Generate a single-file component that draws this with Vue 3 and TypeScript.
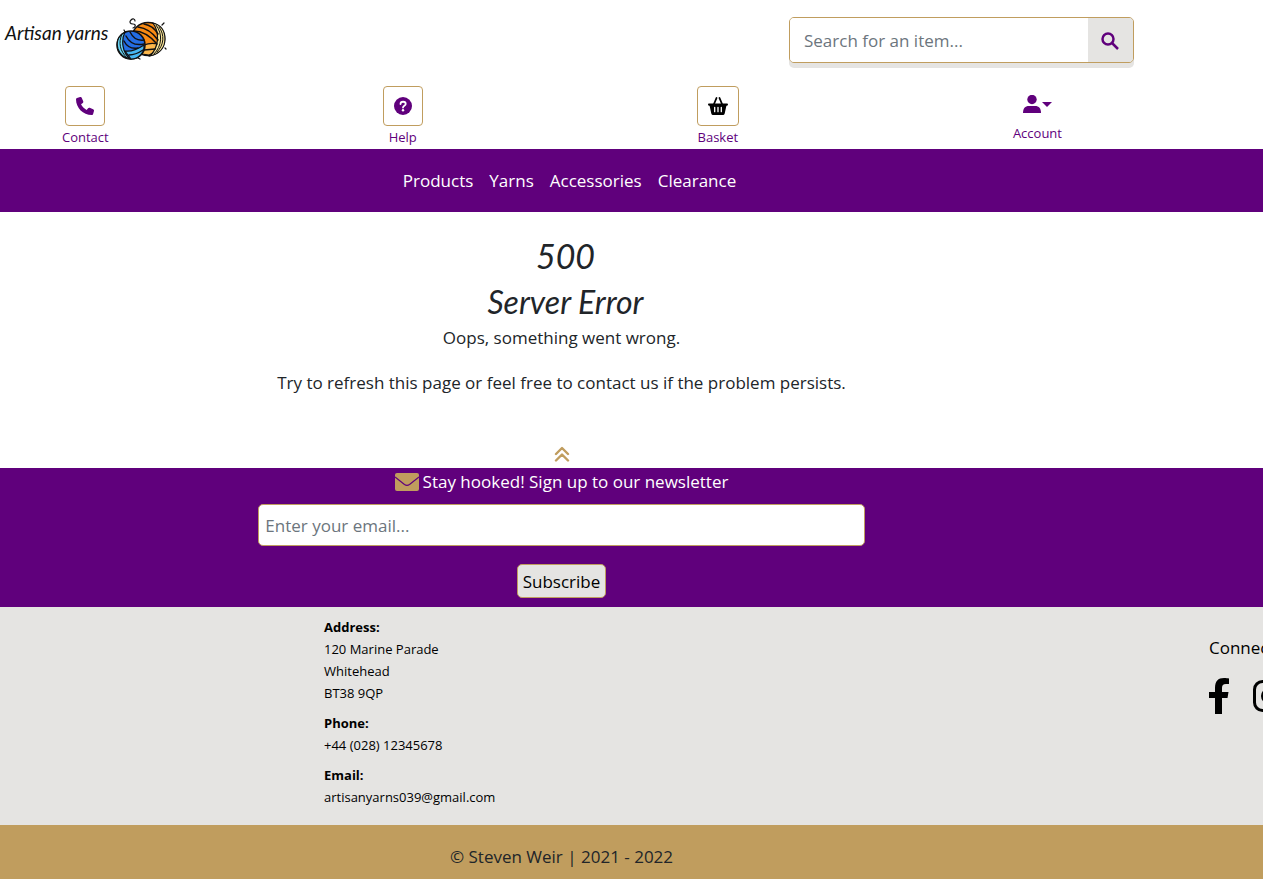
<script setup lang="ts">
import { ref } from 'vue'

const search = ref('')
const email = ref('')
const categories: string[] = ['Products', 'Yarns', 'Accessories', 'Clearance']
const addressLines: string[] = ['120 Marine Parade', 'Whitehead', 'BT38 9QP']
</script>

<template>
  <div class="page">
    <header class="content">
      <div class="top">
        <a class="logo" href="#" aria-label="Artisan yarns home">
          <span class="logo-text">Artisan yarns</span>
          <svg class="yarn" viewBox="0 0 52 44" fill="none" stroke="#111" stroke-linecap="round">
            <path d="M17 11C20 10 20 7 17 7C14 7 13 5 15 3C17 1 19 2 19 4" stroke-width="1.2" />
            <circle cx="32" cy="22" r="16.5" fill="#f98b14" stroke-width="1.5" />
            <path d="M28 28C33 26 37 26 42 27C40 33 37 37 33 38L26 37Z" fill="#fdb84c" stroke-width="1.2" />
            <path d="M37 6C45 8 49 14 49 22C49 31 43 37 34 39C43 30 44 16 37 6Z" fill="#fbe698" stroke-width="1.2" />
            <path d="M40 8C47 17 46 29 38 37M43 10C49 18 48 28 41 35" stroke-width="1" />
            <path d="M18 14C27 14 35 20 41 27M22 10C30 11 37 16 42 23M28 7C34 8 39 12 42 17M28 33L39 32" stroke-width="1.5" />
            <circle cx="15" cy="28" r="14" fill="#246de3" stroke-width="1.5" />
            <path d="M9 15C2 19 0 25 2 32C4 38 9 41 14 42C6 35 5 23 9 15Z" fill="#67d4f5" stroke-width="1.2" />
            <path d="M9 34C15 35 22 32 28 28C29 35 23 42 15 42Z" fill="#47b7f3" stroke-width="1.2" />
            <path d="M6 17C2 26 4 34 11 41" stroke-width="1" />
            <path d="M10 19C13 25 19 29 28 27M14 15C17 21 22 24 28 23M8 24C11 30 16 32 22 31M13 38C18 38 24 35 27 33" stroke-width="1.4" />
            <path d="M46 8L48 6M49 31L50 32M22 41L24 42M8 13L9 15" stroke-width="1.2" />
          </svg>
        </a>
        <form class="search" role="search" @submit.prevent>
          <input v-model="search" type="search" aria-label="Search for an item" placeholder="Search for an item..." />
          <button type="submit" aria-label="Search">
            <svg viewBox="0 0 18 18" fill="none" stroke="currentColor" stroke-width="2.5">
              <circle cx="7" cy="7" r="5.5" /><path d="M11 11L17 17" />
            </svg>
          </button>
        </form>
      </div>

      <div class="actions">
        <a class="action" href="#">
          <span class="tile">
            <svg class="icon" viewBox="0 0 512 512" fill="currentColor"><path d="M165 25C157 6 136-5 116 1L28 25C11 29 0 45 0 64C0 311 201 512 448 512C467 512 483 501 487 484L511 396C517 376 506 355 487 347L391 307C374 300 354 305 343 319L303 368C232 335 177 280 144 209L193 169C207 158 212 138 205 121Z" /></svg>
          </span>
          Contact
        </a>
        <a class="action" href="#">
          <span class="tile">
            <svg class="icon" viewBox="0 0 18 18"><circle cx="9" cy="9" r="9" fill="currentColor" /><path d="M6.5 7C6.5 4 11.7 4 11.7 7C11.7 8.8 9 8.7 9 10.5" fill="none" stroke="#fff" stroke-width="1.8" stroke-linecap="round" /><circle cx="9" cy="13.2" r="1.2" fill="#fff" /></svg>
          </span>
          Help
        </a>
        <a class="action" href="#">
          <span class="tile basket">
            <svg class="icon wide" viewBox="0 0 20 18">
              <path d="M6 7L8.5 1M14 7L11.5 1" fill="none" stroke="currentColor" stroke-width="1.8" stroke-linecap="round" />
              <path d="M1 6.5H19Q20 6.5 20 7.5T19 8.7H18.4L16.7 16.5Q16.3 18 15 18H5Q3.7 18 3.3 16.5L1.6 8.7H1Q0 8.6 0 7.5T1 6.5Z" fill="currentColor" />
              <path d="M6.7 10.3V14.7M10 10.3V14.7M13.3 10.3V14.7" stroke="#fff" stroke-width="1.3" stroke-linecap="round" />
            </svg>
          </span>
          Basket
        </a>
        <button class="action account" type="button" aria-haspopup="true">
          <span class="person">
            <svg class="icon" viewBox="0 0 18 18" fill="currentColor"><circle cx="9" cy="4.5" r="4.7" /><path d="M0 18C0 13.5 2 11 6 11H12C16 11 18 13.5 18 18Z" /></svg>
            <svg class="caret" viewBox="0 0 10 5" fill="currentColor"><path d="M0 0H10L5 5Z" /></svg>
          </span>
          Account
        </button>
      </div>
    </header>

    <nav class="navigation">
      <div class="content links">
        <a v-for="category in categories" :key="category" href="#">{{ category }}</a>
      </div>
    </nav>

    <main class="content">
      <h1>500</h1>
      <h2>Server Error</h2>
      <p>Oops, something went wrong.</p>
      <p>Try to refresh this page or feel free to contact us if the problem persists.</p>
      <a class="to-top" href="#" aria-label="Back to top">
        <svg viewBox="0 0 16 16" fill="none" stroke="currentColor" stroke-width="2.4" stroke-linecap="round" stroke-linejoin="round"><path d="M2 8L8 2L14 8M2 14.5L8 8.5L14 14.5" /></svg>
      </a>
    </main>

    <section class="newsletter">
      <form class="content signup" @submit.prevent>
        <label for="email">
          <svg viewBox="0 0 24 18"><rect width="24" height="18" rx="2" fill="currentColor" /><path d="M0 4L9.5 11.5Q12 13.3 14.5 11.5L24 4" fill="none" stroke="#60007c" stroke-width="1.2" /></svg>
          Stay hooked! Sign up to our newsletter
        </label>
        <input id="email" v-model="email" type="email" placeholder="Enter your email..." />
        <button type="submit">Subscribe</button>
      </form>
    </section>

    <footer>
      <div class="details">
        <address>
          <strong>Address:</strong>
          <span v-for="line in addressLines" :key="line">{{ line }}</span>
          <strong>Phone:</strong>
          <span>+44 (028) 12345678</span>
          <strong>Email:</strong>
          <span>artisanyarns039@gmail.com</span>
        </address>
        <div class="social">
          <p>Connect with us</p>
          <div class="social-icons">
            <a href="#" aria-label="Facebook">
              <svg class="facebook" viewBox="0 0 20 36" fill="currentColor"><path d="M6 36V20H0V14H6V10C6 3 9 0 15 0C17 0 19 .2 20 .5V6H17C14 6 13 7.5 13 10V14H19.5L18.5 20H13V36Z" /></svg>
            </a>
            <a href="#" aria-label="Instagram">
              <svg class="instagram" viewBox="0 0 32 32" fill="none" stroke="currentColor" stroke-width="3"><rect x="1.5" y="1.5" width="29" height="29" rx="8" /><circle cx="16" cy="16" r="6.5" /><circle cx="24.5" cy="7.5" r="2" fill="currentColor" stroke="none" /></svg>
            </a>
          </div>
        </div>
      </div>
      <div class="copyright"><p class="content">© Steven Weir | 2021 - 2022</p></div>
    </footer>
  </div>
</template>

<style>
body {
  margin: 0;
  background: #fff;
}
</style>

<style scoped>
.page {
  overflow: hidden;
  color: #212529;
  font: 400 17px/27px "Open Sans", "Noto Sans", sans-serif;
}
.page * {
  box-sizing: border-box;
}
a {
  color: inherit;
  text-decoration: none;
}
input,
button {
  font: inherit;
}
input::placeholder {
  color: #6c757d;
  opacity: 1;
}
svg {
  display: block;
}
.content {
  margin-right: 140px;
}
.top {
  display: flex;
  justify-content: space-between;
  align-items: flex-start;
  height: 86px;
  margin-right: -11px;
  padding: 17px 0 0 5px;
}
.logo {
  display: flex;
  gap: 9px;
  color: #111;
}
.logo-text {
  width: 102px;
  font: italic 400 19px/32px Lato, sans-serif;
  white-space: nowrap;
}
.yarn {
  width: 52px;
  height: 44px;
}
.search {
  display: flex;
  width: 345px;
  height: 46px;
  border: 1px solid #c09d5e;
  border-radius: 5px;
  background: #e5e4e2;
  box-shadow: 0 5px 0 #e5e4e2;
  overflow: hidden;
}
.search input {
  flex: 1;
  min-width: 0;
  padding: 0 14px;
  border: 0;
  background: #fff;
  appearance: none;
}
.search button {
  display: grid;
  place-items: center;
  width: 45px;
  padding: 2px 2px 0 0;
  border: 0;
  background: #e5e4e2;
  color: #60007c;
}
.search svg {
  width: 18px;
  height: 18px;
}
.actions {
  display: flex;
  justify-content: space-between;
  height: 63px;
  padding: 0 61px 0 62px;
}
.action {
  display: flex;
  flex-direction: column;
  align-items: center;
  color: #60007c;
  font-size: 13px;
  line-height: 22px;
}
.tile {
  display: grid;
  place-items: center;
  width: 40px;
  height: 40px;
  border: 1px solid #c09d5e;
  border-radius: 4px;
}
.basket {
  width: 42px;
  color: #000;
}
.icon {
  width: 18px;
  height: 18px;
}
.wide {
  width: 20px;
}
.account {
  padding: 0;
  border: 0;
  background: none;
}
.person {
  display: flex;
  align-items: center;
  gap: 1px;
  height: 36px;
}
.caret {
  width: 10px;
  height: 5px;
}
.navigation {
  background: #60007c;
  color: #fff;
}
.links {
  display: flex;
  justify-content: center;
  gap: 16px;
  padding: 18px 0 18px 16px;
}
main {
  padding-top: 20px;
  text-align: center;
}
h1,
h2 {
  margin: 0;
  padding-left: 8px;
  font: italic 400 32px/44px Lato, sans-serif;
}
h1 {
  font-size: 34px;
  line-height: 48px;
}
main p {
  margin: 0 0 18px;
}
.to-top {
  display: block;
  width: 16px;
  margin: 0 auto;
  padding: 32px 0 6px;
  color: #c09d5e;
}
.newsletter {
  background: #60007c;
  color: #fff;
}
.signup {
  display: flex;
  flex-direction: column;
  align-items: center;
  padding-bottom: 9px;
}
.signup label {
  display: flex;
  align-items: center;
  gap: 4px;
}
.signup label svg {
  width: 24px;
  height: 18px;
  color: #c09d5e;
}
.signup input {
  width: 54%;
  height: 42px;
  margin: 9px 0 18px;
  padding: 0 6px;
  border: 1px solid #c09d5e;
  border-radius: 5px;
}
.signup button {
  height: 34px;
  padding: 0 5px;
  border: 1px solid #c09d5e;
  border-radius: 5px;
  background: #e5e4e2;
  color: #000;
}
footer {
  color: #000;
}
.details {
  display: flex;
  justify-content: space-between;
  height: 218px;
  padding: 9px 0 0 324px;
  background: #e5e4e2;
}
address {
  font-size: 13px;
  font-style: normal;
  line-height: 22px;
}
address strong,
address span {
  display: block;
}
address strong {
  font-weight: 700;
}
span + strong {
  margin-top: 8px;
}
.social {
  width: 54px;
  padding-top: 18px;
  white-space: nowrap;
}
.social p {
  margin: 0;
}
.social-icons {
  display: flex;
  align-items: center;
  gap: 24px;
  padding-top: 17px;
}
.facebook {
  width: 20px;
  height: 36px;
}
.instagram {
  width: 32px;
  height: 32px;
}
.copyright {
  padding: 18px 0 9px;
  background: #c09d5e;
  color: #212529;
  text-align: center;
}
.copyright p {
  margin-top: 0;
  margin-bottom: 0;
}
</style>
